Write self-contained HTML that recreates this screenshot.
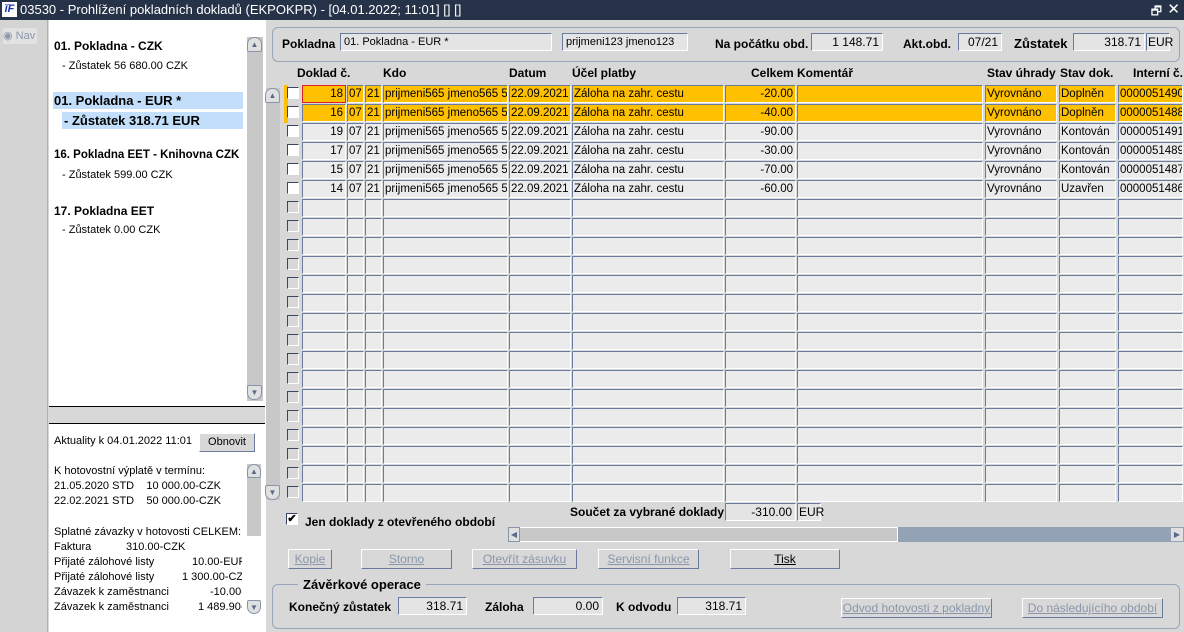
<!DOCTYPE html>
<html><head><meta charset="utf-8"><style>
*{margin:0;padding:0;box-sizing:border-box}
body{width:1184px;height:632px;overflow:hidden;background:#d8d8d8;font-family:"Liberation Sans",sans-serif;font-size:12px;color:#000;position:relative}
.a{position:absolute;white-space:nowrap}
.title{left:0;top:0;width:1184px;height:20px;background:#263248;color:#fff;font-size:13px;line-height:19px;padding-left:20px}
.logo{left:2px;top:2px;width:15px;height:15px;background:#fff;color:#1a2fb0;font:bold italic 11px "Liberation Sans";line-height:15px;text-align:center}
.row{position:absolute;left:0;width:1184px;height:19px;font-size:11.5px}
.row span{position:absolute;top:0;height:18px;background:#ebebeb;border:1px solid;border-color:#6a7c9c #fff #fff #6a7c9c;line-height:16px;padding:0 1px;white-space:nowrap;overflow:hidden}
.row.o span{background:#ffc000}
.row i{position:absolute;left:287px;top:2px;width:12px;height:12px;border:1px solid;border-color:#3a4660 #fff #fff #3a4660;background:#fff}
.row.e i{background:#d8d8d8}
.row.o b{position:absolute;left:284px;top:0;width:4px;height:19px;background:#ffc000}
.r{text-align:right}
.row span.r{padding-right:2px}
.c1{left:302px;width:44px}.c2{left:347px;width:17px}.c3{left:365px;width:17px}.c4{left:383px;width:125px}.c5{left:509px;width:62px}.c6{left:572px;width:152px}.c7{left:725px;width:71px}.c8{left:797px;width:186px}.c9{left:985px;width:72px}.c10{left:1059px;width:57px}.c11{left:1118px;width:65px}
.hd{font-weight:bold;top:66px}
.fld{background:#e4e4e4;border:1px solid;border-color:#6a7c9c #fff #fff #6a7c9c;height:18px;line-height:16px;padding:0 3px;font-size:12px}
.lbl{font-weight:bold;font-size:12px}
.btn{border:1px solid;border-color:#fff #6a7c9c #6a7c9c #fff;height:20px;text-align:center;line-height:18px;color:#8a96aa;text-decoration:underline;text-decoration-color:#8a96aa;background:#d8d8d8}
.sb{background:#c8c8c8}
.arr{width:15px;height:15px;border:1px solid #8894aa;border-radius:7px 7px 2px 2px;background:#e0e0e0;font-size:8px;color:#5a6a88;text-align:center;line-height:13px}
.lst div{position:relative;height:15px}
.lst span{position:absolute;right:0}
</style></head><body>
<div class="a title">03530 - Prohlížení pokladních dokladů (EKPOKPR) - [04.01.2022; 11:01] [] []</div>
<div class="a logo">ĭF</div>
<div class="a" style="right:22px;top:2px;color:#fff;font-size:12px">🗗</div>
<div class="a" style="right:4px;top:0;color:#fff;font-size:15px">✕</div>

<div class="a" style="left:0;top:20px;width:48px;height:612px;background:#d4d4d4;border-right:1px solid #b0b0b0"></div>
<div class="a" style="left:3px;top:28px;width:34px;height:16px;background:#e2e2e2;color:#8a96aa;font-size:11px;line-height:16px">◉ Nav</div>

<div class="a" style="left:49px;top:20px;width:216px;height:612px;background:#fff"></div>
<div class="a sb" style="left:247px;top:37px;width:16px;height:364px"></div>
<div class="a arr" style="left:247px;top:37px">▲</div>
<div class="a arr" style="left:247px;top:385px;border-radius:2px 2px 7px 7px">▼</div>
<div class="a lbl" style="left:54px;top:39px">01. Pokladna - CZK</div>
<div class="a" style="left:62px;top:60px;font-size:11px">- Zůstatek 56 680.00 CZK</div>
<div class="a" style="left:53px;top:92px;width:190px;height:17px;background:#c2defa"></div>
<div class="a lbl" style="left:54px;top:93px;font-size:13px">01. Pokladna - EUR *</div>
<div class="a" style="left:62px;top:112px;width:181px;height:17px;background:#c2defa"></div>
<div class="a lbl" style="left:64px;top:113px;font-size:13px">- Zůstatek 318.71 EUR</div>
<div class="a lbl" style="left:54px;top:149px;font-size:11.5px">16. Pokladna EET - Knihovna CZK</div>
<div class="a" style="left:62px;top:169px;font-size:11px">- Zůstatek 599.00 CZK</div>
<div class="a lbl" style="left:54px;top:204px">17. Pokladna EET</div>
<div class="a" style="left:62px;top:224px;font-size:11px">- Zůstatek 0.00 CZK</div>
<div class="a" style="left:49px;top:406px;width:216px;height:18px;background:#d8d8d8;border-top:1px solid #000;border-bottom:1px solid #000"></div>
<div class="a" style="left:54px;top:435px;font-size:11px">Aktuality k 04.01.2022 11:01</div>
<div class="a" style="left:199px;top:433px;width:56px;height:19px;border:1px solid;border-color:#fff #6a7c9c #6a7c9c #fff;background:#d8d8d8;font-size:11px;text-align:center;line-height:17px">Obnovit</div>
<div class="a" style="left:54px;top:464px;font-size:11px;line-height:15px">K hotovostní výplatě v termínu:<br>21.05.2020 STD&nbsp;&nbsp;&nbsp;&nbsp;10 000.00-CZK<br>22.02.2021 STD&nbsp;&nbsp;&nbsp;&nbsp;50 000.00-CZK</div>
<div class="a" style="left:54px;top:525px;font-size:11px;line-height:15px">Splatné závazky v hotovosti CELKEM:</div>
<div class="a lst" style="left:54px;top:540px;font-size:11px;line-height:15px;width:188px;overflow:hidden;height:75px">
<div>Faktura<span style="left:72px;right:auto">310.00-CZK</span></div>
<div>Přijaté zálohové listy<span style="left:138px;right:auto">10.00-EUR</span></div>
<div>Přijaté zálohové listy<span style="left:128px;right:auto">1 300.00-CZK</span></div>
<div>Závazek k zaměstnanci<span style="left:156px;right:auto">-10.00-EUR</span></div>
<div>Závazek k zaměstnanci<span style="left:144px;right:auto">1 489.90-CZK</span></div>
</div>
<div class="a sb" style="left:247px;top:464px;width:14px;height:72px"></div>
<div class="a arr" style="left:247px;top:464px;width:14px;height:14px">▲</div>
<div class="a arr" style="left:247px;top:600px;width:14px;height:14px;border-radius:2px 2px 7px 7px">▼</div>

<div class="a" style="left:265px;top:20px;width:1px;height:612px;background:#fff"></div>

<div class="a" style="left:272px;top:27px;width:908px;height:35px;border:1px solid #9aa6bc;border-radius:6px"></div>
<div class="a lbl" style="left:282px;top:37px">Pokladna</div>
<div class="a fld" style="left:340px;top:33px;width:212px;font-size:11px">01. Pokladna - EUR *</div>
<div class="a fld" style="left:562px;top:33px;width:126px;font-size:11px">prijmeni123 jmeno123</div>
<div class="a lbl" style="left:715px;top:37px">Na počátku obd.</div>
<div class="a fld r" style="left:811px;top:33px;width:72px">1 148.71</div>
<div class="a lbl" style="left:903px;top:37px">Akt.obd.</div>
<div class="a fld r" style="left:958px;top:33px;width:44px">07/21</div>
<div class="a lbl" style="left:1014px;top:36px;font-size:13px">Zůstatek</div>
<div class="a fld r" style="left:1073px;top:33px;width:72px">318.71</div>
<div class="a fld" style="left:1146px;top:33px;width:24px;padding:0 1px">EUR</div>

<div class="a hd" style="left:297px">Doklad č.</div>
<div class="a hd" style="left:383px">Kdo</div>
<div class="a hd" style="left:509px">Datum</div>
<div class="a hd" style="left:572px">Účel platby</div>
<div class="a hd" style="left:751px">Celkem</div>
<div class="a hd" style="left:797px">Komentář</div>
<div class="a hd" style="left:987px">Stav úhrady</div>
<div class="a hd" style="left:1060px">Stav dok.</div>
<div class="a hd" style="left:1133px">Interní č.</div>

<div class="a sb" style="left:266px;top:88px;width:14px;height:412px"></div>
<div class="a arr" style="left:265px;top:88px">▲</div>
<div class="a arr" style="left:265px;top:485px;border-radius:2px 2px 7px 7px">▼</div>

<div class="row o" style="top:85px"><b></b><i></i><span class="c1 r" style="border:1px solid #e02020">18</span><span class="c2">07</span><span class="c3">21</span><span class="c4">prijmeni565 jmeno565 588</span><span class="c5">22.09.2021</span><span class="c6">Záloha na zahr. cestu</span><span class="c7 r">-20.00</span><span class="c8"></span><span class="c9">Vyrovnáno</span><span class="c10">Doplněn</span><span class="c11">0000051490</span></div>
<div class="row o" style="top:104px"><b></b><i></i><span class="c1 r">16</span><span class="c2">07</span><span class="c3">21</span><span class="c4">prijmeni565 jmeno565 588</span><span class="c5">22.09.2021</span><span class="c6">Záloha na zahr. cestu</span><span class="c7 r">-40.00</span><span class="c8"></span><span class="c9">Vyrovnáno</span><span class="c10">Doplněn</span><span class="c11">0000051488</span></div>
<div class="row" style="top:123px"><i></i><span class="c1 r">19</span><span class="c2">07</span><span class="c3">21</span><span class="c4">prijmeni565 jmeno565 588</span><span class="c5">22.09.2021</span><span class="c6">Záloha na zahr. cestu</span><span class="c7 r">-90.00</span><span class="c8"></span><span class="c9">Vyrovnáno</span><span class="c10">Kontován</span><span class="c11">0000051491</span></div>
<div class="row" style="top:142px"><i></i><span class="c1 r">17</span><span class="c2">07</span><span class="c3">21</span><span class="c4">prijmeni565 jmeno565 588</span><span class="c5">22.09.2021</span><span class="c6">Záloha na zahr. cestu</span><span class="c7 r">-30.00</span><span class="c8"></span><span class="c9">Vyrovnáno</span><span class="c10">Kontován</span><span class="c11">0000051489</span></div>
<div class="row" style="top:161px"><i></i><span class="c1 r">15</span><span class="c2">07</span><span class="c3">21</span><span class="c4">prijmeni565 jmeno565 588</span><span class="c5">22.09.2021</span><span class="c6">Záloha na zahr. cestu</span><span class="c7 r">-70.00</span><span class="c8"></span><span class="c9">Vyrovnáno</span><span class="c10">Kontován</span><span class="c11">0000051487</span></div>
<div class="row" style="top:180px"><i></i><span class="c1 r">14</span><span class="c2">07</span><span class="c3">21</span><span class="c4">prijmeni565 jmeno565 588</span><span class="c5">22.09.2021</span><span class="c6">Záloha na zahr. cestu</span><span class="c7 r">-60.00</span><span class="c8"></span><span class="c9">Vyrovnáno</span><span class="c10">Uzavřen</span><span class="c11">0000051486</span></div>
<div class="row e" style="top:199px"><i></i><span class="c1"></span><span class="c2"></span><span class="c3"></span><span class="c4"></span><span class="c5"></span><span class="c6"></span><span class="c7"></span><span class="c8"></span><span class="c9"></span><span class="c10"></span><span class="c11"></span></div>
<div class="row e" style="top:218px"><i></i><span class="c1"></span><span class="c2"></span><span class="c3"></span><span class="c4"></span><span class="c5"></span><span class="c6"></span><span class="c7"></span><span class="c8"></span><span class="c9"></span><span class="c10"></span><span class="c11"></span></div>
<div class="row e" style="top:237px"><i></i><span class="c1"></span><span class="c2"></span><span class="c3"></span><span class="c4"></span><span class="c5"></span><span class="c6"></span><span class="c7"></span><span class="c8"></span><span class="c9"></span><span class="c10"></span><span class="c11"></span></div>
<div class="row e" style="top:256px"><i></i><span class="c1"></span><span class="c2"></span><span class="c3"></span><span class="c4"></span><span class="c5"></span><span class="c6"></span><span class="c7"></span><span class="c8"></span><span class="c9"></span><span class="c10"></span><span class="c11"></span></div>
<div class="row e" style="top:275px"><i></i><span class="c1"></span><span class="c2"></span><span class="c3"></span><span class="c4"></span><span class="c5"></span><span class="c6"></span><span class="c7"></span><span class="c8"></span><span class="c9"></span><span class="c10"></span><span class="c11"></span></div>
<div class="row e" style="top:294px"><i></i><span class="c1"></span><span class="c2"></span><span class="c3"></span><span class="c4"></span><span class="c5"></span><span class="c6"></span><span class="c7"></span><span class="c8"></span><span class="c9"></span><span class="c10"></span><span class="c11"></span></div>
<div class="row e" style="top:313px"><i></i><span class="c1"></span><span class="c2"></span><span class="c3"></span><span class="c4"></span><span class="c5"></span><span class="c6"></span><span class="c7"></span><span class="c8"></span><span class="c9"></span><span class="c10"></span><span class="c11"></span></div>
<div class="row e" style="top:332px"><i></i><span class="c1"></span><span class="c2"></span><span class="c3"></span><span class="c4"></span><span class="c5"></span><span class="c6"></span><span class="c7"></span><span class="c8"></span><span class="c9"></span><span class="c10"></span><span class="c11"></span></div>
<div class="row e" style="top:351px"><i></i><span class="c1"></span><span class="c2"></span><span class="c3"></span><span class="c4"></span><span class="c5"></span><span class="c6"></span><span class="c7"></span><span class="c8"></span><span class="c9"></span><span class="c10"></span><span class="c11"></span></div>
<div class="row e" style="top:370px"><i></i><span class="c1"></span><span class="c2"></span><span class="c3"></span><span class="c4"></span><span class="c5"></span><span class="c6"></span><span class="c7"></span><span class="c8"></span><span class="c9"></span><span class="c10"></span><span class="c11"></span></div>
<div class="row e" style="top:389px"><i></i><span class="c1"></span><span class="c2"></span><span class="c3"></span><span class="c4"></span><span class="c5"></span><span class="c6"></span><span class="c7"></span><span class="c8"></span><span class="c9"></span><span class="c10"></span><span class="c11"></span></div>
<div class="row e" style="top:408px"><i></i><span class="c1"></span><span class="c2"></span><span class="c3"></span><span class="c4"></span><span class="c5"></span><span class="c6"></span><span class="c7"></span><span class="c8"></span><span class="c9"></span><span class="c10"></span><span class="c11"></span></div>
<div class="row e" style="top:427px"><i></i><span class="c1"></span><span class="c2"></span><span class="c3"></span><span class="c4"></span><span class="c5"></span><span class="c6"></span><span class="c7"></span><span class="c8"></span><span class="c9"></span><span class="c10"></span><span class="c11"></span></div>
<div class="row e" style="top:446px"><i></i><span class="c1"></span><span class="c2"></span><span class="c3"></span><span class="c4"></span><span class="c5"></span><span class="c6"></span><span class="c7"></span><span class="c8"></span><span class="c9"></span><span class="c10"></span><span class="c11"></span></div>
<div class="row e" style="top:465px"><i></i><span class="c1"></span><span class="c2"></span><span class="c3"></span><span class="c4"></span><span class="c5"></span><span class="c6"></span><span class="c7"></span><span class="c8"></span><span class="c9"></span><span class="c10"></span><span class="c11"></span></div>
<div class="row e" style="top:484px"><i></i><span class="c1"></span><span class="c2"></span><span class="c3"></span><span class="c4"></span><span class="c5"></span><span class="c6"></span><span class="c7"></span><span class="c8"></span><span class="c9"></span><span class="c10"></span><span class="c11"></span></div>

<div class="a" style="left:286px;top:513px;width:12px;height:12px;border:1px solid;border-color:#3a4660 #fff #fff #3a4660;background:#fff;font-size:11px;line-height:10px;text-align:center;font-weight:bold">✔</div>
<div class="a lbl" style="left:305px;top:515px">Jen doklady z otevřeného období</div>
<div class="a lbl" style="left:570px;top:505px">Součet za vybrané doklady</div>
<div class="a fld r" style="left:725px;top:503px;width:71px">-310.00</div>
<div class="a fld" style="left:797px;top:503px;width:24px;padding:0 1px">EUR</div>
<div class="a" style="left:508px;top:527px;width:676px;height:15px;background:#94a2b6"></div>
<div class="a" style="left:508px;top:527px;width:390px;height:15px;background:#c8c8c8;border:1px solid #fff"></div>
<div class="a" style="left:508px;top:527px;width:12px;height:15px;background:#e0e0e0;border:1px solid #8894aa;font-size:8px;line-height:13px;color:#5a6a88;text-align:center">◀</div>
<div class="a" style="left:1171px;top:528px;width:12px;height:13px;background:#e0e0e0;font-size:8px;line-height:13px;color:#5a6a88;text-align:center">▶</div>

<div class="a btn" style="left:288px;top:549px;width:44px">Kopie</div>
<div class="a btn" style="left:361px;top:549px;width:91px">Storno</div>
<div class="a btn" style="left:472px;top:549px;width:105px">Otevřít zásuvku</div>
<div class="a btn" style="left:598px;top:549px;width:101px">Servisní funkce</div>
<div class="a btn" style="left:730px;top:549px;width:110px;color:#000;text-decoration-color:#000">Tisk</div>

<div class="a" style="left:272px;top:584px;width:908px;height:45px;border:1px solid #9aa6bc;border-radius:6px"></div>
<div class="a lbl" style="left:298px;top:577px;background:#d8d8d8;padding:0 5px;font-size:13px">Závěrkové operace</div>
<div class="a lbl" style="left:289px;top:600px">Konečný zůstatek</div>
<div class="a fld r" style="left:398px;top:597px;width:69px">318.71</div>
<div class="a lbl" style="left:485px;top:600px">Záloha</div>
<div class="a fld r" style="left:533px;top:597px;width:70px">0.00</div>
<div class="a lbl" style="left:616px;top:600px">K odvodu</div>
<div class="a fld r" style="left:677px;top:597px;width:69px">318.71</div>
<div class="a btn" style="left:841px;top:598px;width:151px">Odvod hotovosti z pokladny</div>
<div class="a btn" style="left:1022px;top:598px;width:141px">Do následujícího období</div>
</body></html>
